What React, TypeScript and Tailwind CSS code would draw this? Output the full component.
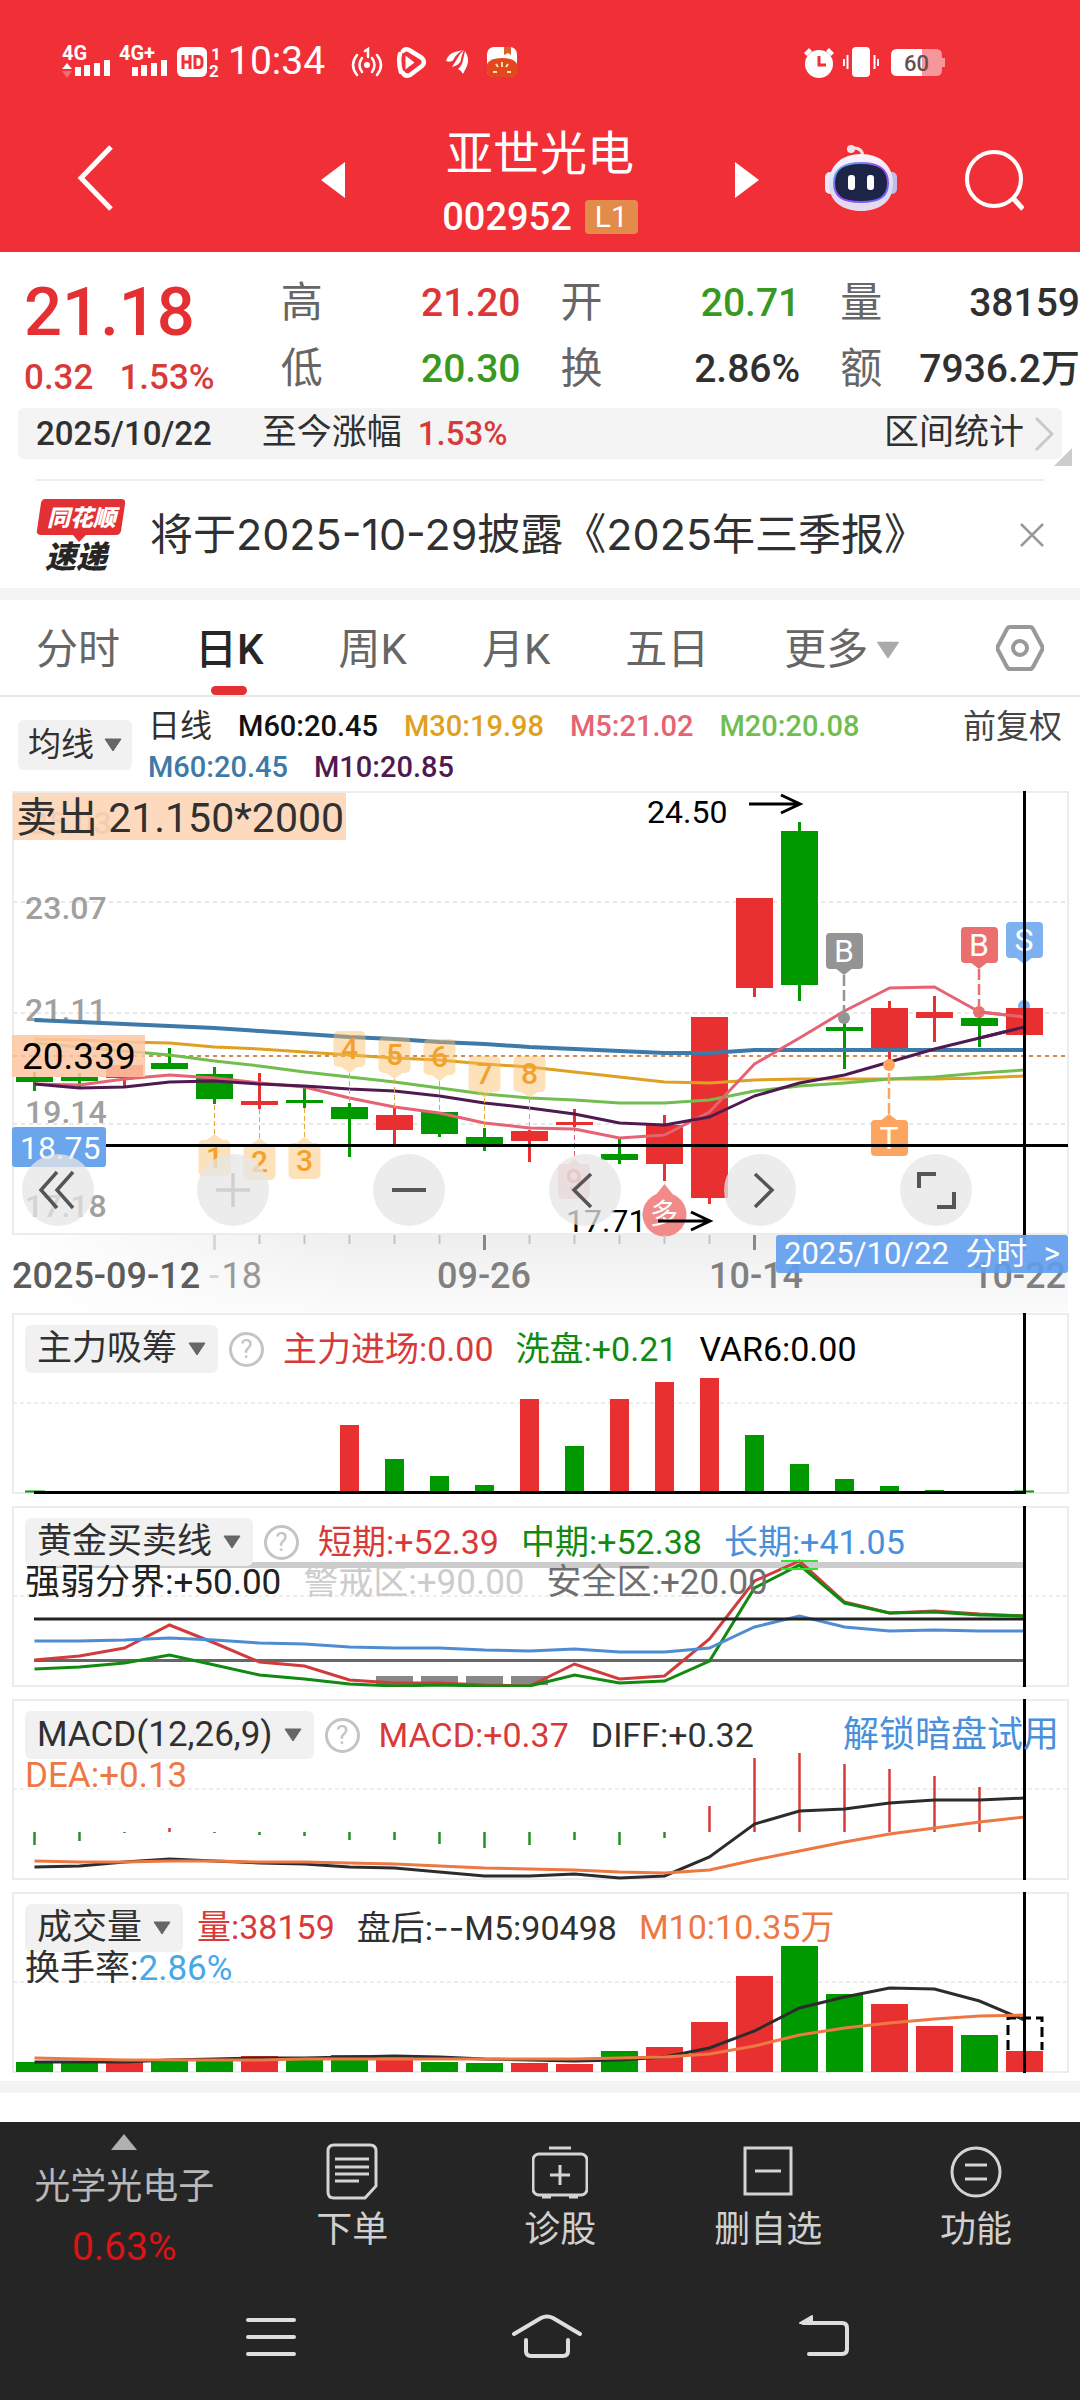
import type { ReactNode } from 'react';
import clsx from 'clsx';

const RED = '#e83030';
const GREEN = '#009900';

const STEP = 45;
const cx = (i: number) => 34.5 + i * STEP;
const line = (ys: number[]) => ys.map((y, i) => `${cx(i)},${y}`).join(' ');

type Candle = { up: boolean; high: number; top: number; bottom: number; low: number };
const c = (dir: 'r' | 'g', high: number, top: number, bottom: number, low: number): Candle => ({
  up: dir === 'r',
  high,
  top,
  bottom,
  low,
});

const candles: Candle[] = [
  c('g', 1072, 1077, 1082, 1091),
  c('g', 1073, 1077, 1081, 1089),
  c('r', 1065, 1065, 1078, 1088),
  c('g', 1048, 1063, 1069, 1069),
  c('g', 1067, 1074, 1099, 1104),
  c('r', 1073, 1101, 1105, 1109),
  c('g', 1088, 1100, 1103, 1108),
  c('g', 1103, 1107, 1119, 1157),
  c('r', 1108, 1115, 1130, 1145),
  c('g', 1112, 1112, 1134, 1137),
  c('g', 1128, 1137, 1144, 1151),
  c('r', 1130, 1131, 1141, 1162),
  c('r', 1109, 1122, 1125, 1127),
  c('g', 1139, 1154, 1160, 1164),
  c('r', 1115, 1125, 1164, 1181),
  c('r', 1017, 1017, 1198, 1204),
  c('r', 898, 898, 988, 997),
  c('g', 822, 831, 985, 1001),
  c('g', 1018, 1027, 1031, 1069),
  c('r', 1001, 1008, 1049, 1061),
  c('r', 996, 1012, 1018, 1042),
  c('g', 1012, 1018, 1026, 1047),
  c('r', 1008, 1008, 1035, 1035),
];

const averages = [
  { color: '#3e79a7', width: 4, ys: [1020, 1022, 1024, 1026, 1028, 1031, 1034, 1037, 1039, 1042, 1044, 1047, 1049, 1051, 1053, 1053, 1050, 1050, 1050, 1050, 1050, 1050, 1050] },
  { color: '#e0a020', width: 3, ys: [1039, 1040, 1042, 1043, 1047, 1049, 1052, 1055, 1058, 1060, 1064, 1067, 1072, 1077, 1082, 1083, 1080, 1079, 1079, 1079, 1079, 1078, 1076] },
  { color: '#71bd50', width: 3, ys: [1043, 1047, 1051, 1055, 1061, 1066, 1072, 1077, 1082, 1088, 1094, 1098, 1100, 1103, 1103, 1100, 1091, 1086, 1083, 1079, 1077, 1073, 1070] },
  { color: '#e56373', width: 3, ys: [1084, 1085, 1079, 1075, 1078, 1083, 1087, 1098, 1107, 1113, 1123, 1128, 1129, 1138, 1135, 1112, 1064, 1038, 1011, 988, 987, 1012, 1017] },
  { color: '#4f1a50', width: 3, ys: [1084, 1088, 1087, 1082, 1081, 1084, 1086, 1089, 1091, 1096, 1103, 1108, 1114, 1123, 1125, 1117, 1096, 1083, 1075, 1062, 1049, 1038, 1027] },
];

// nine-count labels: arrow up when they hang below the candle
const counts = [
  { n: '1', i: 4, y: 1140, from: 1104, below: true },
  { n: '2', i: 5, y: 1144, from: 1109, below: true },
  { n: '3', i: 6, y: 1143, from: 1108, below: true },
  { n: '4', i: 7, y: 1031, from: 1103, below: false },
  { n: '5', i: 8, y: 1037, from: 1108, below: false },
  { n: '6', i: 9, y: 1039, from: 1112, below: false },
  { n: '7', i: 10, y: 1056, from: 1128, below: false },
  { n: '8', i: 11, y: 1056, from: 1130, below: false },
];

const force = [
  [7, 1425, 'r'], [8, 1459, 'g'], [9, 1476, 'g'], [10, 1485, 'g'], [11, 1399, 'r'], [12, 1446, 'g'],
  [13, 1399, 'r'], [14, 1382, 'r'], [15, 1378, 'r'], [16, 1435, 'g'], [17, 1464, 'g'], [18, 1479, 'g'],
  [19, 1486, 'g'], [20, 1490, 'g'],
] as const;

const shortTerm = [1660, 1656, 1648, 1625, 1643, 1662, 1666, 1680, 1683, 1683, 1685, 1686, 1664, 1679, 1676, 1639, 1581, 1561, 1602, 1613, 1611, 1614, 1616];
const midTerm = [1669, 1667, 1663, 1655, 1665, 1675, 1679, 1684, 1686, 1685, 1686, 1686, 1675, 1683, 1681, 1661, 1588, 1565, 1603, 1613, 1612, 1615, 1616];
const longTerm = [1641, 1641, 1640, 1638, 1640, 1643, 1644, 1647, 1648, 1648, 1650, 1651, 1649, 1652, 1652, 1648, 1627, 1616, 1627, 1631, 1630, 1631, 1631];

const macd = [1845, 1841, 1833, 1828, 1833, 1835, 1836, 1840, 1840, 1844, 1848, 1845, 1840, 1845, 1838, 1806, 1758, 1753, 1764, 1769, 1776, 1787, 1792];
const diff = [1867, 1866, 1862, 1859, 1861, 1863, 1864, 1867, 1868, 1872, 1876, 1876, 1874, 1878, 1876, 1857, 1824, 1811, 1809, 1803, 1800, 1800, 1798];
const dea = [1861, 1862, 1862, 1861, 1861, 1862, 1862, 1863, 1864, 1866, 1868, 1869, 1870, 1872, 1873, 1870, 1860, 1851, 1842, 1834, 1828, 1822, 1817];

const volume = [2062, 2062, 2062, 2060, 2058, 2056, 2060, 2055, 2060, 2062, 2063, 2063, 2064, 2051, 2047, 2022, 1976, 1946, 1994, 2004, 2026, 2035, 2051];
const volumeUp = 'ggrggrggrggrrgrrrggrrgr';
const vol5 = [2062, 2062, 2062, 2060, 2059, 2058, 2058, 2057, 2056, 2057, 2059, 2060, 2061, 2060, 2057, 2048, 2031, 2008, 1997, 1988, 1989, 2001, 2020];
const vol10 = [2058, 2059, 2060, 2060, 2060, 2060, 2059, 2059, 2059, 2059, 2059, 2059, 2059, 2058, 2057, 2054, 2046, 2035, 2028, 2023, 2019, 2016, 2015];

function Caret({ className = 'h-[14px] w-[18px] text-[#666]' }: { className?: string }) {
  return (
    <svg viewBox="0 0 18 14" className={className} aria-hidden="true">
      <path d="M1 1h16L9 13z" fill="currentColor" stroke="currentColor" strokeLinejoin="round" />
    </svg>
  );
}

function StatusBar() {
  return (
    <div className="flex h-[79px] items-end px-[62px] text-white">
      <svg viewBox="60 34 162 44" className="-ml-0.5 h-11 w-[162px]" fill="#fff" aria-hidden="true">
        <g fontFamily="Roboto" fontWeight="700">
          <text x="62" y="59" fontSize="20">4G</text>
          <text x="119" y="59" fontSize="20">4G+</text>
          <text x="211" y="59" fontSize="17">1</text>
          <text x="209" y="76" fontSize="17">2</text>
        </g>
        <path d="M67 62l5 6H62zM75 66h6v9h-6zM84 64h6v11h-6zM94 62h6v13h-6zM104 59h6v16h-6z" />
        <path d="M62 70h10l-5 7z" opacity=".3" />
        <path d="M132 66h6v9h-6zM141 64h6v11h-6zM151 62h6v13h-6zM161 59h6v16h-6z" />
        <rect x="177" y="46" width="30" height="30" rx="6" />
        <g stroke="#f12f37" strokeWidth="3" fill="none">
          <path d="M183 54v14M190 54v14M183 61h7M195 55.500v11h3q4 0 4-4v-3q0-4-4-4z" />
        </g>
      </svg>
      <span className="ml-[6px] text-[39px] leading-9">10:34</span>
      <svg viewBox="350 44 170 34" className="ml-[25px] h-[34px] w-[170px]" fill="none" aria-hidden="true">
        <g stroke="#fff" strokeWidth="2.500" strokeLinecap="round">
          <path d="M357 54q-8 10 0 20M362 57q-5 7 0 14M377 54q8 10 0 20M372 57q5 7 0 14M365 50l3-2v8" />
        </g>
        <circle cx="367" cy="64" r="3" fill="#fff" />
        <path d="M403 50q2-3 6-1l13 8q4 4 0 8l-12 9q-5 2-7-2M400 53q-2 8 1 18" stroke="#fff" strokeWidth="4.500" strokeLinecap="round" strokeLinejoin="round" />
        <path d="M405.500 54.500l9 7-9 7z" fill="#fff" />
        <g fill="#fff">
          <path d="M446 60q2-7 9-9l8-2q-7 4-9 9q-2 4-8 2z" />
          <path d="M452 66q2-3 5-8q3-6 7-9q-3 7-3 10q-1 5-9 7z" />
          <path d="M458 68q4-3 5-9l2-9q5 8 2 15l-4 8q-1-3-5-5z" />
        </g>
        <rect x="487" y="46" width="30" height="30" rx="7" fill="#fff" />
        <path d="M504 46h7v8l-3-2-4 2z" fill="#d9622b" />
        <path d="M487 63q3-6 15-6t15 6v7q0 6-7 6h-16q-7 0-7-6z" fill="#e2481c" />
        <path d="M502 61v5M496 63l2 3M508 63l-2 3M493 71h4M511 71h-4" stroke="#ffe0b8" strokeWidth="2" />
      </svg>
      <svg viewBox="802 44 146 34" className="ml-auto h-[34px] w-[146px]" aria-hidden="true">
        <g fill="#fff">
          <circle cx="819" cy="63" r="14" />
          <path d="M804 52l5-5 3 3-5 5zM834 52l-5-5-3 3 5 5z" />
          <rect x="852" y="46" width="18" height="30" rx="4" />
          <path d="M847.500 54v14M844 58v7M874.500 54v14M878 58v7" stroke="#fff" strokeWidth="2" />
          <path d="M897 48h25v27h-25q-6 0-6-6V54q0-6 6-6z" />
          <path d="M922 48h14q6 0 6 6v3h3v9h-3v3q0 6-6 6h-14z" opacity=".5" />
        </g>
        <path d="M819 55v9h7" stroke="#f12f37" strokeWidth="3" fill="none" />
        <text x="904" y="70" fontFamily="Roboto" fontWeight="500" fontSize="22" fill="#66504f">60</text>
      </svg>
      <span className="w-[70px]" />
    </div>
  );
}

function Header() {
  return (
    <header className="bg-[#f12f37] text-white">
      <StatusBar />
      <div className="flex h-[173px] items-center pl-[77px] pr-14 pt-10">
        <button aria-label="返回" className="mb-4">
          <svg viewBox="0 0 36 66" className="h-[66px] w-9" fill="none" stroke="#fff" strokeWidth="5">
            <path d="M34 2L4 33l30 31" />
          </svg>
        </button>
        <button aria-label="上一只" className="mb-3 ml-auto">
          <svg viewBox="0 0 24 36" className="h-9 w-6" fill="#fff"><path d="M24 0v36L0 18z" /></svg>
        </button>
        <div className="flex w-[390px] flex-col items-center">
          <h1 className="text-[47px] leading-[62px]">亚世光电</h1>
          <p className="flex items-center gap-[13px] text-[38px] font-medium leading-[64px]">
            002952
            <span className="rounded-[4px] bg-[#e38b4a] px-[10px] text-[30px] font-normal leading-[34px]">L1</span>
          </p>
        </div>
        <button aria-label="下一只" className="mb-3">
          <svg viewBox="0 0 24 36" className="h-9 w-6" fill="#fff"><path d="M0 0v36l24-18z" /></svg>
        </button>
        <button aria-label="智能助手" className="mb-4 ml-[65px]">
          <svg viewBox="0 0 74 70" className="h-[70px] w-[74px]">
            <defs>
              <linearGradient id="shell" x1="0" y1="0" x2="0" y2="1">
                <stop offset="0" stopColor="#fff5fa" />
                <stop offset=".6" stopColor="#dcd9f2" />
                <stop offset="1" stopColor="#e9d9ee" />
              </linearGradient>
              <linearGradient id="visor" x1="0" y1="0" x2="1" y2="1">
                <stop offset="0" stopColor="#45c3f0" />
                <stop offset=".5" stopColor="#a23ff0" />
                <stop offset="1" stopColor="#4a7af5" />
              </linearGradient>
            </defs>
            <path d="M28 5q10-1 11 8" fill="none" stroke="#f3dfe8" strokeWidth="3" />
            <circle cx="27" cy="6" r="4" fill="#f7dfe8" />
            <rect x="1" y="29" width="10" height="22" rx="5" fill="#eae8f8" />
            <rect x="63" y="29" width="10" height="22" rx="5" fill="#bfc0ea" />
            <path d="M37 11c19 0 32 11 32 30 0 18-14 27-32 27S5 59 5 41c0-19 13-30 32-30z" fill="url(#shell)" />
            <path d="M37 20c18 0 27 6 27 20s-9 19-27 19-27-5-27-19 9-20 27-20z" fill="#1d2547" stroke="url(#visor)" strokeWidth="2" />
            <rect x="24" y="32" width="7" height="15" rx="3" fill="#fff" />
            <rect x="43" y="32" width="7" height="15" rx="3" fill="#fff" />
          </svg>
        </button>
        <button aria-label="搜索" className="mb-3 ml-[66px]">
          <svg viewBox="0 0 60 62" className="h-[62px] w-[60px]" fill="none" stroke="#fff" strokeWidth="4">
            <circle cx="30" cy="30" r="27" />
            <path d="M49 49l10 11" strokeWidth="5" />
          </svg>
        </button>
      </div>
    </header>
  );
}

const quotes = [
  { label: '高', value: '21.20', color: 'text-[#de3636]' },
  { label: '开', value: '20.71', color: 'text-[#389820]' },
  { label: '量', value: '38159', color: 'text-[#303030]' },
  { label: '低', value: '20.30', color: 'text-[#389820]' },
  { label: '换', value: '2.86%', color: 'text-[#303030]' },
  { label: '额', value: '7936.2万', color: 'text-[#303030]' },
];

function Quote() {
  return (
    <section>
      <div className="flex pt-[18px]">
        <div className="w-[26%] shrink-0 pl-6 font-medium">
          <p className="text-[67px] leading-[84px] text-[#e53033]">21.18</p>
          <p className="flex gap-[26px] text-[35px] leading-[48px] text-[#d83a3a]">
            <span>0.32</span>
            <span>1.53%</span>
          </p>
        </div>
        <dl className="grid flex-1 grid-cols-3 gap-x-10">
          {quotes.map((q) => (
            <div key={q.label} className="flex items-center justify-between whitespace-nowrap leading-[66px]">
              <dt className="text-[42px] text-[#666]">{q.label}</dt>
              <dd className={clsx('text-[39px] font-medium', q.color)}>{q.value}</dd>
            </div>
          ))}
        </dl>
      </div>
      <div className="relative mx-[18px] mt-[6px] flex h-[51px] items-center rounded-md bg-[#f4f4f4] pl-[18px] pr-2 text-[35px] text-[#303030]">
        <span className="text-[33px] font-medium">2025/10/22</span>
        <span className="ml-[50px]">至今涨幅</span>
        <span className="ml-[16px] text-[33px] font-medium text-[#d83a3a]">1.53%</span>
        <button className="ml-auto flex items-center gap-[10px]">
          区间统计
          <svg viewBox="0 0 20 36" className="h-9 w-5" fill="none" stroke="#c8c8c8" strokeWidth="3"><path d="M2 2l16 16L2 34" /></svg>
        </button>
        <svg viewBox="0 0 18 18" className="absolute -bottom-[7px] -right-[10px] h-[18px] w-[18px]" fill="#ccc"><path d="M18 0v18H0z" /></svg>
      </div>
      <div className="mx-9 mt-5 flex h-[109px] items-center border-t-2 border-[#ececec]">
        <svg viewBox="0 0 90 74" className="h-[74px] w-[90px] shrink-0" role="img" aria-label="同花顺速递">
          <path d="M9 1h76q5 0 4 5l-4 27q-1 4-5 4H50l-7 7-6-7H5q-5 0-4-5L5 5q1-4 4-4z" fill="#e23034" />
          <g fontFamily="'Noto Sans CJK SC', sans-serif" fontWeight="900" fontStyle="italic">
            <text x="11" y="28" fontSize="23" fill="#fff">同花顺</text>
            <text x="9" y="70" fontSize="31" fill="#262626">速递</text>
          </g>
        </svg>
        <p className="ml-6 whitespace-nowrap text-[43px] text-[#303030] [font-family:Inter,'Noto_Sans_CJK_SC',sans-serif]">
          将于2025-10-29披露《2025年三季报》
        </p>
        <button aria-label="关闭" className="ml-auto">
          <svg viewBox="0 0 24 24" className="h-6 w-6" fill="none" stroke="#999" strokeWidth="2.500"><path d="M1 1l22 22M23 1L1 23" /></svg>
        </button>
      </div>
    </section>
  );
}

const tabs = ['分时', '日K', '周K', '月K', '五日'];

function Tabs() {
  return (
    <nav className="flex h-[97px] items-stretch gap-[75px] border-b-2 border-[#e8e8e8] px-9 text-[42px] text-[#666]">
      {tabs.map((t) => (
        <button key={t} className={clsx('relative pt-1', t === '日K' && 'font-medium text-[#262626]')}>
          {t}
          {t === '日K' && (
            <span className="absolute bottom-0 left-1/2 h-[9px] w-9 -translate-x-1/2 rounded-full bg-[#e53033]" />
          )}
        </button>
      ))}
      <button className="flex items-center gap-2 pt-1">
        更多
        <Caret className="h-[18px] w-6 text-[#aaa]" />
      </button>
      <button aria-label="设置" className="ml-auto">
        <svg viewBox="0 0 48 48" className="h-12 w-12" fill="none" stroke="#999" strokeWidth="4">
          <path d="M14 3h20q2 0 3 2l9 17q1 2 0 4l-9 17q-1 2-3 2H14q-2 0-3-2L2 26q-1-2 0-4l9-17q1-2 3-2z" />
          <circle cx="24" cy="24" r="7" />
        </svg>
      </button>
    </nav>
  );
}

function AverageLegend() {
  return (
    <div className="flex h-[94px] px-[18px] pt-[9px]">
      <button className="mt-[14px] flex h-[50px] w-[114px] items-center justify-center gap-[10px] rounded-md bg-[#f1f1f1] text-[33px] text-[#303030]">
        均线
        <Caret />
      </button>
      <div className="ml-4 text-[29px] font-medium leading-[41px]">
        <div className="flex gap-[26px]">
          <span className="text-[32px] font-normal text-[#303030]">日线</span>
          <span className="text-[#111]">M60:20.45</span>
          <span className="text-[#e0a020]">M30:19.98</span>
          <span className="text-[#e56373]">M5:21.02</span>
          <span className="text-[#71bd50]">M20:20.08</span>
        </div>
        <div className="flex gap-[26px]">
          <span className="text-[#3e79a7]">M60:20.45</span>
          <span className="text-[#4f1a50]">M10:20.85</span>
        </div>
      </div>
      <button className="ml-auto self-start text-[33px] leading-[41px] text-[#444]">前复权</button>
    </div>
  );
}

function Marker({ x, y, label, color, dotY, below }: { x: number; y: number; label: string; color: string; dotY: number; below?: boolean }) {
  const tip = below ? y - 6 : y + 42;
  const base = below ? y + 1 : y + 35;
  return (
    <g>
      <path d={`M${x} ${tip}V${dotY}`} stroke={color} strokeWidth="2.500" strokeDasharray="11 4" />
      <circle cx={x} cy={dotY} r="6" fill={color} />
      <rect x={x - 18} y={y} width="37" height="36" rx="4" fill={color} />
      <path d={`M${x - 9} ${base}L${x} ${tip}L${x + 9} ${base}z`} fill={color} />
      <text x={x} y={y + 29} fontSize="32" fill="#fff" textAnchor="middle">{label}</text>
    </g>
  );
}

const chartButtons: { label: string; icon: ReactNode; muted?: boolean }[] = [
  { label: '最早', icon: <path d="M35 18L19 36l16 18M51 18L35 36l16 18" /> },
  { label: '放大', icon: <path d="M19 36h34M36 19v34" />, muted: true },
  { label: '缩小', icon: <path d="M19 36h34" strokeWidth="4" /> },
  { label: '前移', icon: <path d="M42 20L25 36l17 17" /> },
  { label: '后移', icon: <path d="M31 20l17 16-17 17" /> },
  { label: '全屏', icon: <path d="M19 34V20h17M37 53h17V38" strokeWidth="4" /> },
];

function KChart() {
  return (
    <div className="relative">
      <svg viewBox="0 791 1080 522" className="block w-full" role="img" aria-label="日K线图">
        <defs>
          <linearGradient id="axis" x1="0" y1="0" x2="0" y2="1">
            <stop offset="0" stopColor="#eeeeee" />
            <stop offset="1" stopColor="#fbfbfb" />
          </linearGradient>
          <linearGradient id="fade" x1="0" y1="0" x2="1" y2="0">
            <stop offset="0" stopColor="#fff" />
            <stop offset="1" stopColor="#fff" stopOpacity="0" />
          </linearGradient>
        </defs>
        <rect x="12" y="1235" width="1056" height="77" fill="url(#axis)" />
        <rect x="12" y="1235" width="350" height="77" fill="url(#fade)" />
        <rect x="13" y="792" width="1055" height="442" fill="none" stroke="#ececec" strokeWidth="2" />
        <path d="M13 902H1068M13 1013H1068M13 1124H1068" stroke="#e8e8e8" strokeWidth="2" strokeDasharray="4 4" />
        <g fontSize="32" fontWeight="500" fill="#a0a0a0">
          <text x="25" y="919">23.07</text>
          <text x="25" y="1021">21.11</text>
          <text x="25" y="1123">19.14</text>
          <text x="25" y="1217">17.18</text>
        </g>
        <path d="M13 1056H1068" stroke="#cf8a4e" strokeWidth="2" strokeDasharray="4 4" />

        {candles.map((k, i) => (
          <g key={i} fill={k.up ? RED : GREEN}>
            <rect x={cx(i) - 1.5} y={k.high} width="3" height={k.low - k.high} />
            <rect x={cx(i) - 18.5} y={k.top} width="37" height={k.bottom - k.top} />
          </g>
        ))}
        {averages.map((a) => (
          <polyline key={a.color} points={line(a.ys)} fill="none" stroke={a.color} strokeWidth={a.width} strokeLinejoin="round" />
        ))}

        {counts.map((m) => {
          const x = cx(m.i);
          const tip = m.below ? m.y - 6 : m.y + 42;
          const base = m.below ? m.y : m.y + 36;
          return (
            <g key={m.n}>
              <path d={`M${x} ${tip}V${m.from}`} stroke="#e5a63c" strokeDasharray="5 3" />
              <g fill="#fbbf65" opacity=".45">
                <rect x={x - 16} y={m.y} width="32" height="36" rx="5" />
                <path d={`M${x - 8} ${base}L${x} ${tip}L${x + 8} ${base}z`} />
              </g>
              <text x={x} y={m.y + 28} fontSize="30" fontWeight="500" fill="#f3a02c" textAnchor="middle">{m.n}</text>
            </g>
          );
        })}
        <path d="M574.500 1127V1158" stroke="#e56373" strokeDasharray="5 3" />
        <path d="M558 1168q0-4 5-4l6 0 5-6 6 6 5 0q5 0 5 4v26q0 5-5 5h-22q-5 0-5-5z" fill="#f7c4c4" />
        <text x="574" y="1190" fontSize="30" fontWeight="500" fill="#ec6f6f" textAnchor="middle">9</text>

        <Marker x={844} y={933} label="B" color="#949494" dotY={1018} />
        <Marker x={979} y={927} label="B" color="#ec6f6f" dotY={1012} />
        <g>
          <circle cx="1024" cy="1006" r="6" fill="#7eb1f0" />
          <rect x="1006" y="922" width="37" height="36" rx="4" fill="#7eb1f0" />
          <path d="M1015 957l9 7 9-7z" fill="#7eb1f0" />
          <text x="1024" y="951" fontSize="32" fill="#fff" textAnchor="middle">S</text>
        </g>
        <rect x="1006" y="1008" width="37" height="27" fill={RED} />
        <path d="M979.500 1012L1024.500 1017" stroke="#e56373" strokeWidth="3" />
        <path d="M979.500 1038L1024.500 1027" stroke="#4f1a50" strokeWidth="3" />
        <Marker x={889} y={1120} label="T" color="#fda55f" dotY={1065} below />

        <path d="M664.500 1184l8 10a22 22 0 1 1-16 0z" fill="#f28a8a" />
        <text x="664" y="1224" fontSize="28" fill="#fff" textAnchor="middle">多</text>

        <g fontSize="32">
          <text x="647" y="823">24.50</text>
          <text x="566" y="1232">17.71</text>
        </g>
        <g fill="none" stroke="#000" strokeWidth="3">
          <path d="M749 804h50M781 795l19 9-19 9M658 1221h50M691 1212l19 9-19 9" />
          <path d="M106 1145.500H1068M1024.500 791V1235" />
        </g>

        <rect x="13" y="793" width="333" height="47" fill="#fdd9bd" />
        <text x="30" y="834" fontSize="32" fontWeight="500" fill="#f3cdb1">25.03</text>
        <text x="16" y="832" fontSize="41" fill="#303030">卖出 21.150*2000</text>
        <rect x="12" y="1035" width="133" height="42" fill="#fdc7a2" opacity=".85" />
        <text x="22" y="1069" fontSize="37">20.339</text>
        <rect x="12" y="1127" width="94" height="40" rx="3" fill="#6ba5ec" />
        <text x="20" y="1159" fontSize="32" fill="#fff">18.75</text>

        {candles.map((_, i) =>
          i < 4 ? null : (
            <path
              key={i}
              d={`M${cx(i)} 1235v${i % 6 === 4 ? 15 : 9}`}
              stroke={i === 4 ? '#d8d8d8' : i % 6 === 4 ? '#888' : '#c4c4c4'}
              strokeWidth={i % 6 === 4 ? 3 : 2}
            />
          ),
        )}
        <g fontSize="36" fill="#808080">
          <text x="12" y="1288" fill="#5c5c5c" fontWeight="500">2025-09-12</text>
          <text x="209" y="1288" fill="#d4d4d4">-</text>
          <text x="262" y="1288" textAnchor="end" fill="#999">18</text>
          <text x="484" y="1288" textAnchor="middle" fontWeight="500">09-26</text>
          <text x="756" y="1288" textAnchor="middle" fontWeight="500">10-14</text>
          <text x="1066" y="1288" textAnchor="end" fontWeight="500">10-22</text>
        </g>
      </svg>
      <div className="absolute left-[2%] right-[10%] top-[363px] flex justify-between">
        {chartButtons.map((b) => (
          <button key={b.label} aria-label={b.label} className="h-[72px] w-[72px] rounded-full bg-[#e6e6e6]/75">
            <svg viewBox="0 0 72 72" fill="none" stroke={b.muted ? '#d0d0d0' : '#555'} strokeWidth="3.500">
              {b.icon}
            </svg>
          </button>
        ))}
      </div>
      <button className="absolute right-3 top-[444px] flex h-[38px] w-[292px] items-center justify-between rounded-[3px] bg-[#5e9ded]/90 px-2 text-[31px] text-white">
        <span>2025/10/22</span>
        <span>分时</span>
        <span>&gt;</span>
      </button>
    </div>
  );
}

type PanelProps = {
  top: number;
  name: string;
  help?: boolean;
  items: ReactNode;
  second?: ReactNode;
  action?: string;
  children: ReactNode;
};

function Panel({ top, name, help, items, second, action, children }: PanelProps) {
  return (
    <section className="relative mb-3">
      <svg viewBox={`0 ${top} 1080 181`} className="block w-full" role="img" aria-label={name}>
        <rect x="13" y={top + 1} width="1055" height="179" fill="none" stroke="#ececec" strokeWidth="2" />
        <path d={`M13 ${top + 90}H1068`} stroke="#dcdcdc" strokeDasharray="4 3" />
        {children}
        <path d={`M1024.500 ${top}v181`} stroke="#000" strokeWidth="3" />
      </svg>
      <div className="absolute inset-x-[25px] top-3 whitespace-nowrap text-[34px] text-[#303030]">
        <div className="flex h-12 items-center">
          <button className="flex h-12 items-center gap-[11px] rounded-md bg-[#f1f1f1] px-3 text-[35px]">
            {name}
            <Caret />
          </button>
          {help && (
            <button aria-label="说明" className="ml-[11px] mr-[5px] flex h-[35px] w-[35px] items-center justify-center rounded-full border-[3px] border-[#c4c4c4] text-[26px] leading-none text-[#c4c4c4]">
              ?
            </button>
          )}
          <div className="ml-[14px] flex gap-[22px]">{items}</div>
          {action && <a href="#unlock" className="-mr-1 ml-auto text-[36px] text-[#4a8fda]">{action}</a>}
        </div>
        {second && <div className="flex gap-[22px] text-[35px] leading-[34px]">{second}</div>}
      </div>
    </section>
  );
}

function Indicators() {
  return (
    <>
      <Panel
        top={1313}
        name="主力吸筹"
        help
        items={
          <>
            <span className="text-[#d83a3a]">主力进场:0.00</span>
            <span className="text-[#128a12]">洗盘:+0.21</span>
            <span className="text-black">VAR6:0.00</span>
          </>
        }
      >
        {force.map(([i, y, dir]) => (
          <rect key={i} x={cx(i) - 9.5} y={y} width="19" height={1492 - y} fill={dir === 'r' ? RED : GREEN} />
        ))}
        <path d="M25 1491.500h20M1014 1491.500h20" stroke={GREEN} strokeWidth="2" />
        <path d="M34 1492.500H1024" stroke="#000" strokeWidth="3" />
      </Panel>

      <Panel
        top={1506}
        name="黄金买卖线"
        help
        items={
          <>
            <span className="text-[#d83a3a]">短期:+52.39</span>
            <span className="text-[#128a12]">中期:+52.38</span>
            <span className="text-[#4a8fda]">长期:+41.05</span>
          </>
        }
        second={
          <>
            <span className="text-[#222]">强弱分界:+50.00</span>
            <span className="text-[#ccc]">警戒区:+90.00</span>
            <span className="text-[#707070]">安全区:+20.00</span>
          </>
        }
      >
        <path d="M34 1565H1024" stroke="#ccc" strokeWidth="6" />
        <path d="M34 1660.500H1024" stroke="#666" strokeWidth="3" />
        {[8, 9, 10, 11].map((i) => (
          <rect key={i} x={cx(i) - 18.5} y="1676" width="37" height="9" fill="#888" />
        ))}
        <g fill="none" strokeWidth="3">
          <polyline points={line(shortTerm)} stroke="#d03c3c" />
          <polyline points={line(midTerm)} stroke="#128a12" />
          <polyline points={line(longTerm)} stroke="#4f8cd2" />
        </g>
        <path d="M34 1619H1024" stroke="#222" strokeWidth="3" />
        <path d="M781 1561h37M781 1569h37" stroke="#2fe62f" strokeWidth="2" />
      </Panel>

      <Panel
        top={1699}
        name="MACD(12,26,9)"
        help
        action="解锁暗盘试用"
        items={
          <>
            <span className="text-[#d83a3a]">MACD:+0.37</span>
            <span>DIFF:+0.32</span>
          </>
        }
        second={<span className="text-[#ee7844]">DEA:+0.13</span>}
      >
        {macd.map((y, i) => (
          <path key={i} d={`M${cx(i)} 1832V${y}`} stroke={y < 1832 ? '#d83a3a' : '#249024'} strokeWidth="2.500" />
        ))}
        <g fill="none" strokeWidth="3">
          <polyline points={line(diff)} stroke="#2c2c2c" />
          <polyline points={line(dea)} stroke="#ee7844" />
        </g>
      </Panel>

      <Panel
        top={1892}
        name="成交量"
        items={
          <>
            <span className="text-[#d83a3a]">量:38159</span>
            <span>
              盘后:<span className="[font-family:Inter]">--</span>M5:90498
            </span>
            <span className="text-[#ee7844]">M10:10.35万</span>
          </>
        }
        second={
          <span>
            换手率:<span className="text-[#47a8e8]">2.86%</span>
          </span>
        }
      >
        {volume.map((y, i) => (
          <rect key={i} x={cx(i) - 18.5} y={y} width="37" height={2072 - y} fill={volumeUp[i] === 'r' ? RED : GREEN} />
        ))}
        <path d="M1008 2050V2018H1042V2050" fill="none" stroke="#000" strokeWidth="3" strokeDasharray="10 5" />
        <g fill="none" strokeWidth="3">
          <polyline points={line(vol5)} stroke="#2c2c2c" />
          <polyline points={line(vol10)} stroke="#ee7844" />
        </g>
      </Panel>
    </>
  );
}

const actions: { label: string; icon: ReactNode }[] = [
  {
    label: '下单',
    icon: (
      <>
        <path d="M10 3h36q6 0 6 6v35L41 56H10q-6 0-6-6V9q0-6 6-6z" />
        <path d="M11 17h34M11 25h34M11 32h34M11 39h24" />
      </>
    ),
  },
  {
    label: '诊股',
    icon: (
      <>
        <rect x="1" y="12" width="54" height="41" rx="6" />
        <path d="M17 6h22M28 23v20M18 33h20M10 55h9M37 55h9" />
      </>
    ),
  },
  {
    label: '删自选',
    icon: (
      <>
        <rect x="5" y="6" width="46" height="46" />
        <path d="M15 29h26" />
      </>
    ),
  },
  {
    label: '功能',
    icon: (
      <>
        <circle cx="28" cy="30" r="24" />
        <path d="M17 23h22M17 37h22" />
      </>
    ),
  },
];

function BottomBar() {
  return (
    <footer className="bg-[#252525] pb-[39px] text-[36px] text-[#d0d0d0]">
      <div className="flex h-[155px]">
        <button className="flex w-[23%] flex-col items-center pt-3 text-[#b8b8b8]">
          <svg viewBox="0 0 26 16" className="h-4 w-[26px]" fill="#b0b0b0"><path d="M13 0l13 16H0z" /></svg>
          <span className="mt-3 leading-[50px]">光学光电子</span>
          <span className="mt-[10px] text-[39px] leading-[50px] text-[#d81414]">0.63%</span>
        </button>
        {actions.map((a) => (
          <button key={a.label} className="flex flex-1 flex-col items-center pt-5">
            <svg viewBox="0 0 56 60" className="h-[60px] w-14" fill="none" stroke="#d4d4d4" strokeWidth="3">
              {a.icon}
            </svg>
            <span className="mt-1 leading-[48px]">{a.label}</span>
          </button>
        ))}
      </div>
      <div className="flex items-center justify-between pl-[21.75%] pr-[20.5%] pt-9">
        <button aria-label="最近任务">
          <svg viewBox="0 0 72 48" className="h-12 w-[72px]" fill="none" stroke="#dedede" strokeWidth="4" strokeLinecap="round">
            <path d="M13 7h46M13 24h46M13 41h46" />
          </svg>
        </button>
        <button aria-label="主页">
          <svg viewBox="0 0 72 48" className="h-12 w-[72px]" fill="none" stroke="#dedede" strokeWidth="4" strokeLinecap="round" strokeLinejoin="round">
            <path d="M3 21L30 5q6-3 12 0l27 16M15 27v11q0 5 5 5h32q5 0 5-5V27" />
          </svg>
        </button>
        <button aria-label="返回">
          <svg viewBox="0 0 72 48" className="h-12 w-[72px]" fill="none" stroke="#dedede" strokeWidth="4" strokeLinecap="round" strokeLinejoin="round">
            <path d="M16 10h39q5 0 5 5v21q0 5-5 5H22" />
            <path d="M13 10l12-7v7z" fill="#dedede" strokeWidth="2" />
          </svg>
        </button>
      </div>
    </footer>
  );
}

export default function App() {
  return (
    <div className="flex min-h-screen flex-col bg-white [font-family:Roboto,'Noto_Sans_CJK_SC',sans-serif]">
      <Header />
      <main className="flex-1">
        <Quote />
        <div className="h-3 bg-[#f4f4f4]" />
        <Tabs />
        <AverageLegend />
        <KChart />
        <Indicators />
        <div className="-mt-1 h-3 bg-[#f4f4f4]" />
        <div className="h-7" />
      </main>
      <BottomBar />
    </div>
  );
}
